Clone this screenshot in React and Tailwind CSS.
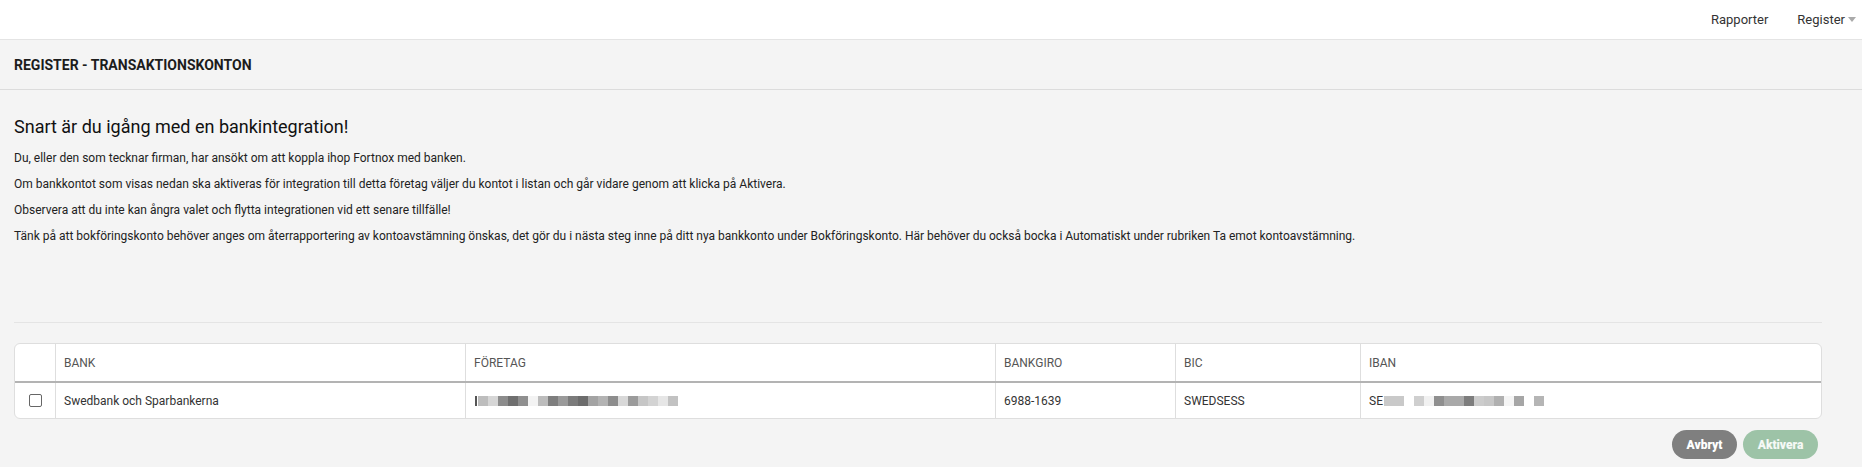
import { ChevronDown } from "lucide-react";

const columns = ["", "BANK", "FÖRETAG", "BANKGIRO", "BIC", "IBAN"];

// blurred placeholders for masked data
const companyBlocks = [
  ["#bdbdbd", 10], ["#d6d6d6", 10], ["#8c8c8c", 10], ["#6f6f6f", 10], ["#8f8f8f", 10],
  ["#f3f3f3", 10], ["#bcbcbc", 10], ["#7e7e7e", 10], ["#9a9a9a", 10], ["#7b7b7b", 10],
  ["#6c6c6c", 10], ["#a3a3a3", 10], ["#b3b3b3", 10], ["#8d8d8d", 10], ["#d8d8d8", 10],
  ["#9b9b9b", 10], ["#c6c6c6", 10], ["#d3d3d3", 10], ["#e6e6e6", 10], ["#c2c2c2", 10],
];
const ibanBlocks = [
  ["#c9c9c9", 20], ["#fff", 10], ["#cfcfcf", 10], ["#f1f1f1", 10], ["#8f8f8f", 10],
  ["#a9a9a9", 20], ["#7d7d7d", 10], ["#cccccc", 10], ["#c7c7c7", 10], ["#b0b0b0", 10],
  ["#f5f5f5", 10], ["#a6a6a6", 10], ["#fff", 10], ["#b5b5b5", 10],
];

function Blur({ blocks }) {
  return (
    <div className="flex h-[10px]">
      {blocks.map(([c, w], i) => (
        <div key={i} className="h-full" style={{ background: c, width: w }} />
      ))}
    </div>
  );
}

export default function App() {
  return (
    <div className="min-h-screen bg-[#f4f4f4] text-[#222] font-['Roboto',sans-serif]">
      <nav className="h-[40px] bg-white border-b border-[#e4e4e4] flex items-center justify-end gap-[29px] pr-[6px] text-[13px] text-[#333]">
        <span>Rapporter</span>
        <span className="flex items-center gap-[3px]">
          Register
          <svg width="8" height="5" viewBox="0 0 8 5"><path d="M0 0h8L4 5z" fill="#aaa" /></svg>
        </span>
      </nav>

      <div className="h-[50px] flex items-center pt-[2px] px-[14px] border-b border-[#dcdcdc]">
        <h1 className="text-[14px] font-bold text-[#1c1c1c]">
          REGISTER - TRANSAKTIONSKONTON
        </h1>
      </div>

      <main className="pl-[14px] pr-[40px] pt-[25px]">
        <h2 className="text-[18px] leading-[24px] text-[#111]">Snart är du igång med en bankintegration!</h2>
        <div className="mt-[11px] flex flex-col gap-[9px] text-[12px] leading-[17px]">
          <p>Du, eller den som tecknar firman, har ansökt om att koppla ihop Fortnox med banken.</p>
          <p>Om bankkontot som visas nedan ska aktiveras för integration till detta företag väljer du kontot i listan och går vidare genom att klicka på Aktivera.</p>
          <p>Observera att du inte kan ångra valet och flytta integrationen vid ett senare tillfälle!</p>
          <p>Tänk på att bokföringskonto behöver anges om återrapportering av kontoavstämning önskas, det gör du i nästa steg inne på ditt nya bankkonto under Bokföringskonto. Här behöver du också bocka i Automatiskt under rubriken Ta emot kontoavstämning.</p>
        </div>

        <div className="mt-[77px] border-t border-[#e4e4e4]" />

        <div className="mt-[20px] bg-white border border-[#dedede] rounded-[6px] overflow-hidden">
          <div className="grid grid-cols-[40px_410px_530px_180px_185px_1fr] h-[39px] border-b-2 border-[#b3b3b3] text-[12px] text-[#555]">
            {columns.map((c, i) => (
              <div key={i} className={`flex items-center px-[8px] ${i > 0 ? "border-l border-[#dedede]" : ""}`}>
                {c}
              </div>
            ))}
          </div>
          <div className="grid grid-cols-[40px_410px_530px_180px_185px_1fr] h-[35px] text-[12px] text-[#333]">
            <div className="flex items-center justify-center">
              <div className="w-[13px] h-[13px] border border-[#666] rounded-[2px] bg-white" />
            </div>
            <div className="flex items-center px-[8px] border-l border-[#dedede]">Swedbank och Sparbankerna</div>
            <div className="flex items-center px-[9px] border-l border-[#dedede]">
              <span className="w-[2px] h-[10px] bg-[#555] mr-[1px]" />
              <Blur blocks={companyBlocks} />
            </div>
            <div className="flex items-center px-[8px] border-l border-[#dedede]">6988-1639</div>
            <div className="flex items-center px-[8px] border-l border-[#dedede]">SWEDSESS</div>
            <div className="flex items-center px-[8px] border-l border-[#dedede]">
              <span className="mr-[1px]">SE</span>
              <Blur blocks={ibanBlocks} />
            </div>
          </div>
        </div>

        <div className="mt-[11px] flex justify-end gap-[6px] pr-[4px]">
          <button className="h-[29px] w-[65px] rounded-full bg-[#7f7f7f] text-white text-[12px] font-black">
            Avbryt
          </button>
          <button className="h-[29px] w-[75px] rounded-full bg-[#9dc3a7] text-white/90 text-[12px] font-black">
            Aktivera
          </button>
        </div>
      </main>
    </div>
  );
}
